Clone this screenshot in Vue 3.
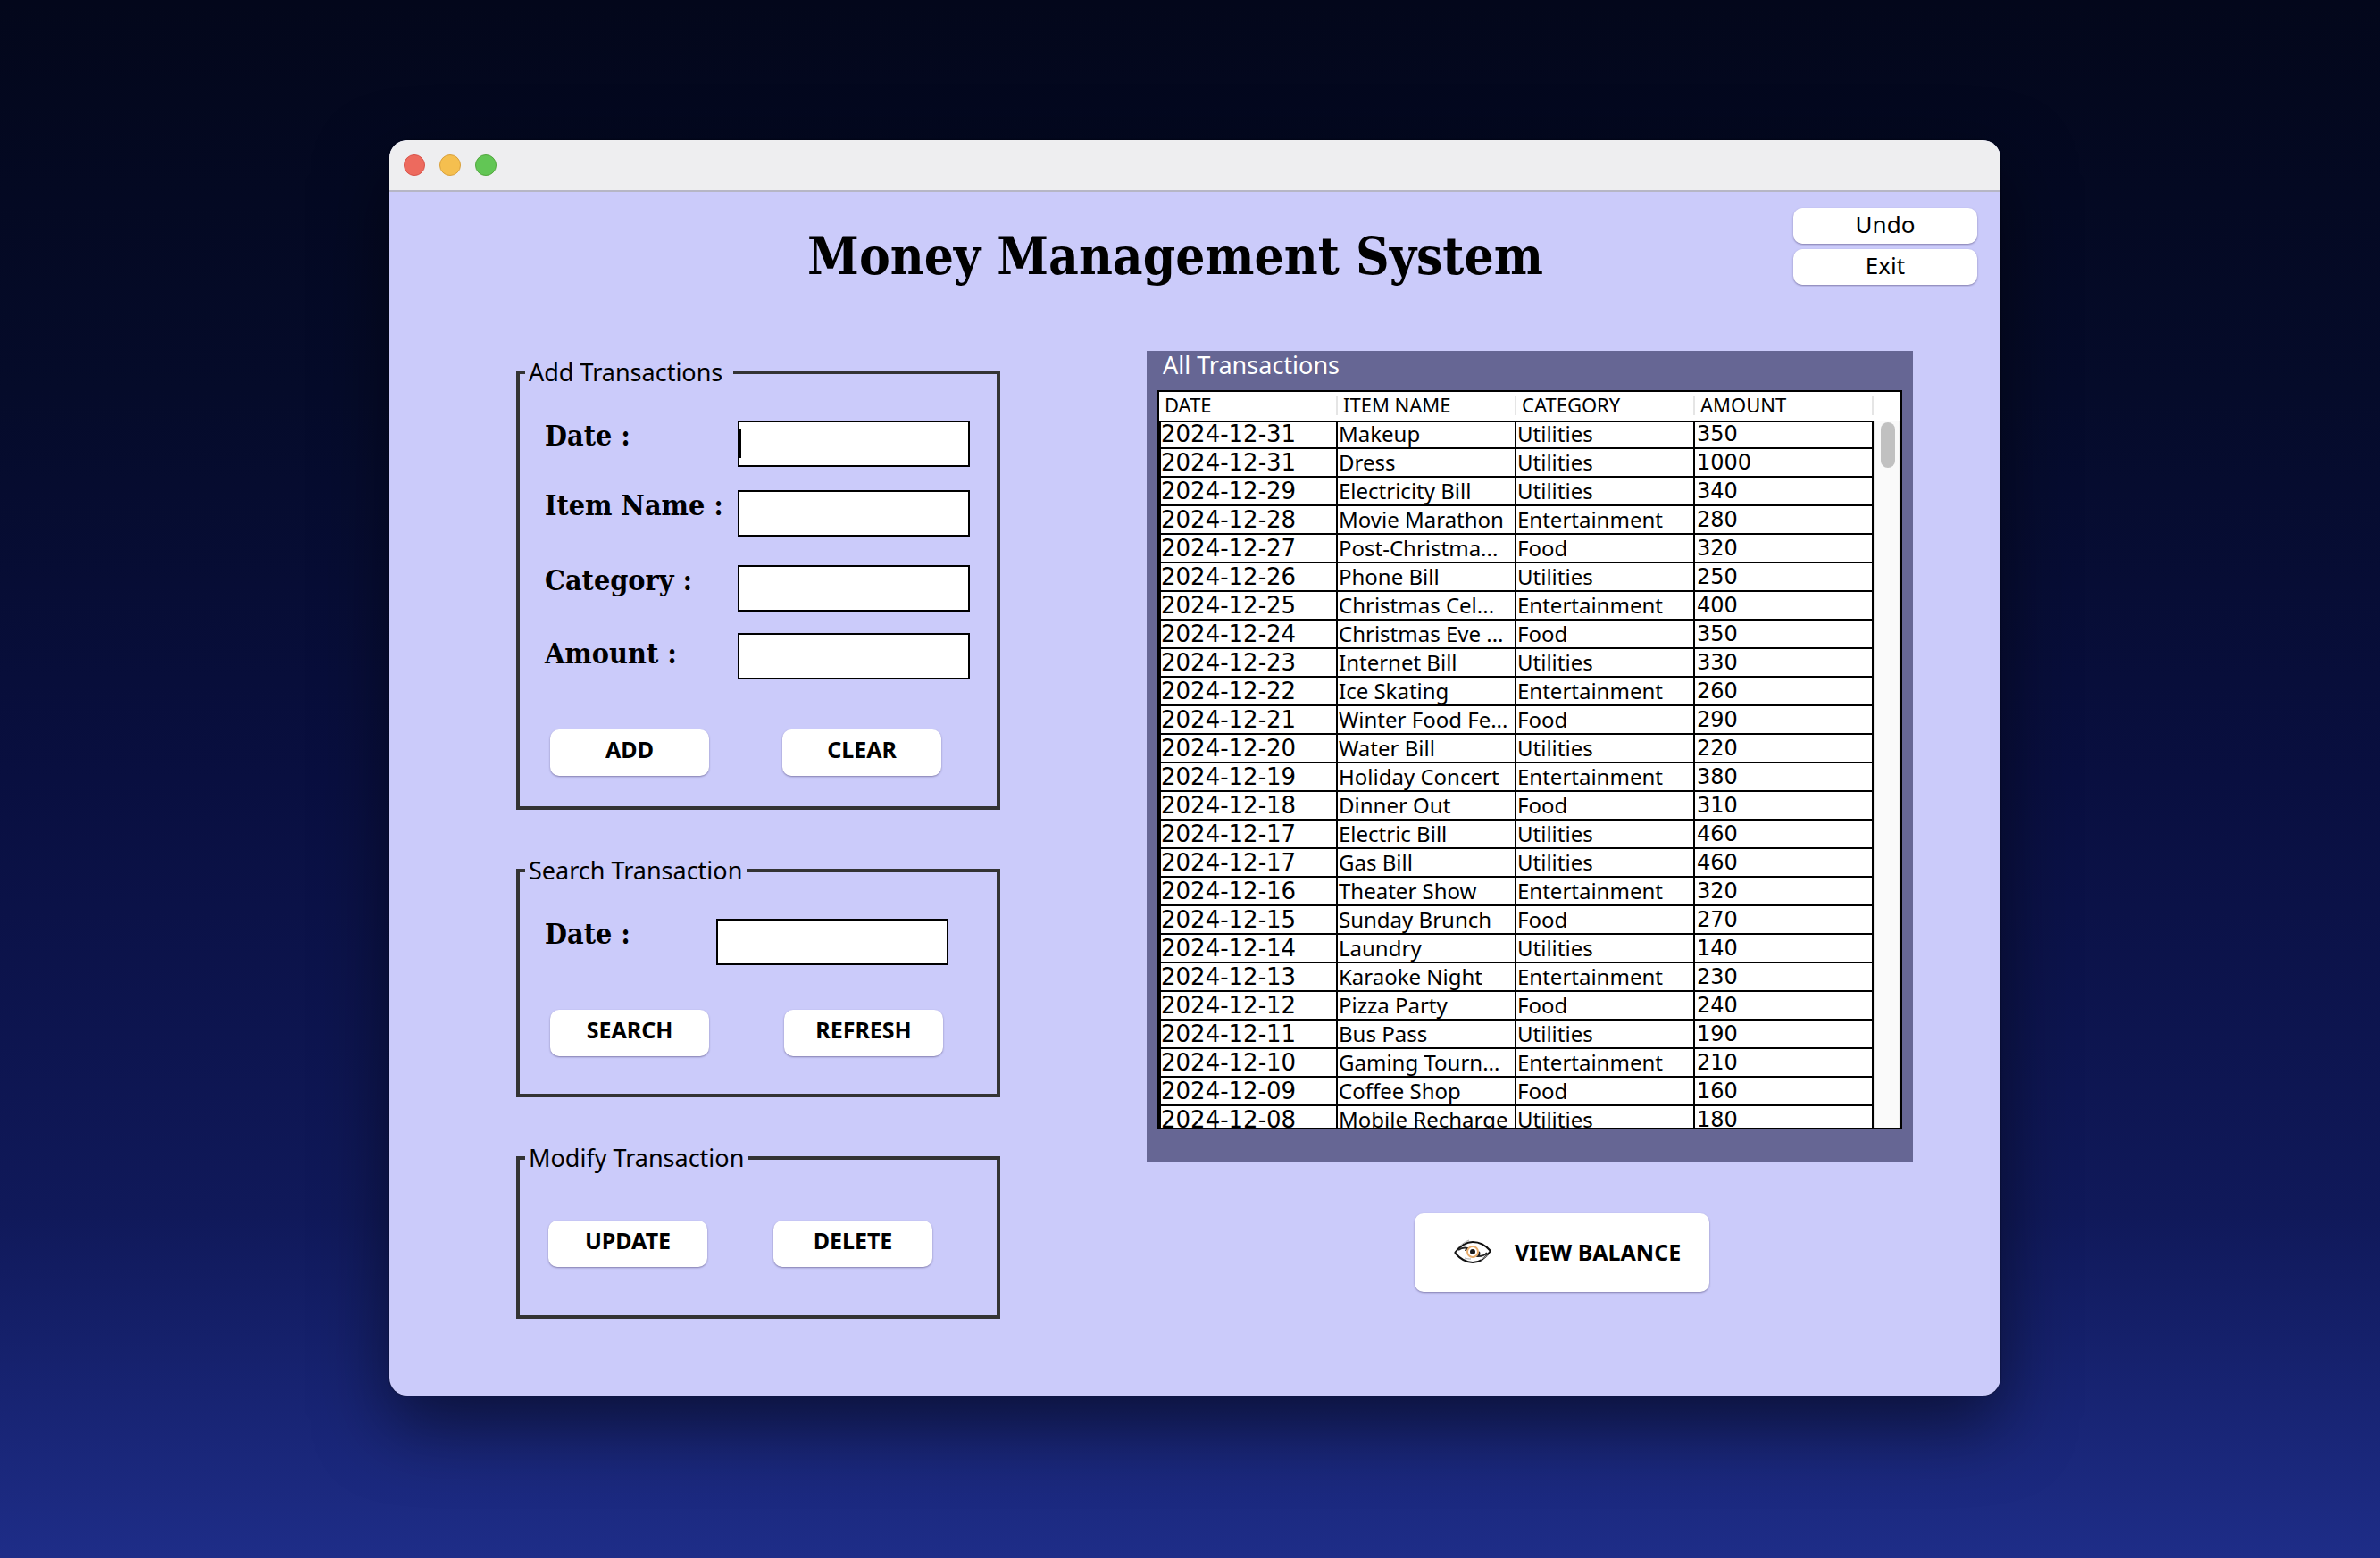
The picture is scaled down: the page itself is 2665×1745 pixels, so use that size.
<script setup>
import { ref } from 'vue'

const columns = ['DATE', 'ITEM NAME', 'CATEGORY', 'AMOUNT']

const transactions = [
  ['2024-12-31', 'Makeup', 'Utilities', '350'],
  ['2024-12-31', 'Dress', 'Utilities', '1000'],
  ['2024-12-29', 'Electricity Bill', 'Utilities', '340'],
  ['2024-12-28', 'Movie Marathon', 'Entertainment', '280'],
  ['2024-12-27', 'Post-Christma...', 'Food', '320'],
  ['2024-12-26', 'Phone Bill', 'Utilities', '250'],
  ['2024-12-25', 'Christmas Cel...', 'Entertainment', '400'],
  ['2024-12-24', 'Christmas Eve ...', 'Food', '350'],
  ['2024-12-23', 'Internet Bill', 'Utilities', '330'],
  ['2024-12-22', 'Ice Skating', 'Entertainment', '260'],
  ['2024-12-21', 'Winter Food Fe...', 'Food', '290'],
  ['2024-12-20', 'Water Bill', 'Utilities', '220'],
  ['2024-12-19', 'Holiday Concert', 'Entertainment', '380'],
  ['2024-12-18', 'Dinner Out', 'Food', '310'],
  ['2024-12-17', 'Electric Bill', 'Utilities', '460'],
  ['2024-12-17', 'Gas Bill', 'Utilities', '460'],
  ['2024-12-16', 'Theater Show', 'Entertainment', '320'],
  ['2024-12-15', 'Sunday Brunch', 'Food', '270'],
  ['2024-12-14', 'Laundry', 'Utilities', '140'],
  ['2024-12-13', 'Karaoke Night', 'Entertainment', '230'],
  ['2024-12-12', 'Pizza Party', 'Food', '240'],
  ['2024-12-11', 'Bus Pass', 'Utilities', '190'],
  ['2024-12-10', 'Gaming Tourn...', 'Entertainment', '210'],
  ['2024-12-09', 'Coffee Shop', 'Food', '160'],
  ['2024-12-08', 'Mobile Recharge', 'Utilities', '180'],
]

const entry = ref({ date: '', item: '', category: '', amount: '' })
const searchDate = ref('')

function clearEntry() {
  entry.value = { date: '', item: '', category: '', amount: '' }
}
</script>

<template>
  <div class="desktop">
    <main class="window">
      <div class="titlebar">
        <span class="light red"></span>
        <span class="light yellow"></span>
        <span class="light green"></span>
      </div>

      <header class="header">
        <h1 class="title">Money Management System</h1>
        <div class="header-actions">
          <button type="button" class="btn btn-small">Undo</button>
          <button type="button" class="btn btn-small">Exit</button>
        </div>
      </header>

      <div class="content">
        <div class="forms">
          <fieldset class="group">
            <legend>Add Transactions&nbsp;</legend>
            <div class="fields fields-add">
              <label for="add-date">Date :</label>
              <input id="add-date" v-model="entry.date" class="active" type="text" />
              <label for="add-item">Item Name :</label>
              <input id="add-item" v-model="entry.item" type="text" />
              <label for="add-category">Category :</label>
              <input id="add-category" v-model="entry.category" type="text" />
              <label for="add-amount" class="low">Amount :</label>
              <input id="add-amount" v-model="entry.amount" type="text" />
            </div>
            <div class="actions actions-add">
              <button type="button" class="btn">ADD</button>
              <button type="button" class="btn" @click="clearEntry">CLEAR</button>
            </div>
          </fieldset>

          <fieldset class="group">
            <legend>Search Transaction</legend>
            <div class="fields fields-search">
              <label for="search-date">Date :</label>
              <input id="search-date" v-model="searchDate" type="text" />
            </div>
            <div class="actions actions-search">
              <button type="button" class="btn">SEARCH</button>
              <button type="button" class="btn" @click="searchDate = ''">REFRESH</button>
            </div>
          </fieldset>

          <fieldset class="group">
            <legend>Modify Transaction</legend>
            <div class="actions actions-modify">
              <button type="button" class="btn">UPDATE</button>
              <button type="button" class="btn">DELETE</button>
            </div>
          </fieldset>
        </div>

        <div class="records">
          <section class="panel">
            <h2 class="panel-title">All Transactions</h2>
            <div class="scroll">
              <table class="table">
                <thead>
                  <tr>
                    <th v-for="name in columns" :key="name" scope="col">{{ name }}</th>
                  </tr>
                </thead>
                <tbody>
                  <tr v-for="(row, i) in transactions" :key="i">
                    <td class="date">{{ row[0] }}</td>
                    <td>{{ row[1] }}</td>
                    <td>{{ row[2] }}</td>
                    <td class="amount">{{ row[3] }}</td>
                  </tr>
                </tbody>
              </table>
              <div class="track"><div class="thumb"></div></div>
            </div>
          </section>

          <button type="button" class="btn btn-balance">
            <svg class="eye" viewBox="0 0 42 28" aria-hidden="true">
              <path d="M1 15C9 5 15 3 21 3c8 0 14 3 20 10" fill="none" stroke="#111" stroke-width="2" />
              <path d="M1 15c6 7 12 11 20 11s14-4 20-13" fill="none" stroke="#111" stroke-width="2" />
              <path d="M5 12c3-2 7-3 10-2c-1 1-2 2-2 3" fill="none" stroke="#222" stroke-width="2" />
              <path d="M28 14c1 2 0 4-1 5c4 0 8-1 10-4" fill="none" stroke="#222" stroke-width="2" />
              <path d="M4 10c4-4 8-7 13-9M12 21c3 1 5 1 7 1M30 23l8-5" fill="none" stroke="#aaa" stroke-width="1" />
              <circle cx="21" cy="14" r="6" fill="#fff" stroke="#e9ad6c" stroke-width="2" />
              <circle cx="21" cy="14" r="3" fill="#1b1b1b" />
            </svg>
            <span>VIEW BALANCE</span>
          </button>
        </div>
      </div>
    </main>
  </div>
</template>

<style>
body {
  margin: 0;
}
</style>

<style scoped>
.desktop {
  box-sizing: border-box;
  min-height: 100vh;
  padding: 157px 425px 182px 436px;
  background: linear-gradient(#03071b 0%, #050b2a 25%, #090f40 50%, #10195a 78%, #1e2d88 100%);
  color: #000;
  font-family: 'Noto Sans', 'Open Sans', sans-serif;
}

.window {
  padding-bottom: 86px;
  border-radius: 20px;
  background: #cbcbfa;
  box-shadow: 0 32px 80px rgba(0, 0, 0, 0.5), 0 0 2px rgba(0, 0, 0, 0.6);
}

.titlebar {
  display: flex;
  align-items: center;
  gap: 16px;
  box-sizing: border-box;
  height: 58px;
  padding-left: 16px;
  border-bottom: 2px solid #b6b6c4;
  border-radius: 20px 20px 0 0;
  background: #eeeef0;
}

.light {
  box-sizing: border-box;
  width: 24px;
  height: 24px;
  border: 1px solid;
  border-radius: 50%;
}

.red {
  border-color: #d8544b;
  background: #ed6a5e;
}

.yellow {
  border-color: #d9a03c;
  background: #f5bf4f;
}

.green {
  border-color: #53a73f;
  background: #62c655;
}

.header {
  display: flex;
  align-items: flex-start;
  padding: 18px 26px 0 188px;
}

.title {
  flex: 1;
  margin: 14px 0 0;
  font: bold 58px/80px 'DejaVu Serif Condensed', 'DejaVu Serif', serif;
  text-align: center;
}

.header-actions {
  display: flex;
  flex-direction: column;
  gap: 6px;
}

.btn {
  width: 178px;
  height: 52px;
  padding: 0 0 8px;
  border: 0;
  border-radius: 10px;
  background: #fff;
  box-shadow: 0 1px 2px rgba(60, 50, 100, 0.5);
  color: #000;
  font: bold 25px/34px 'Noto Sans', 'Open Sans', sans-serif;
}

.btn-small {
  width: 206px;
  height: 40px;
  padding-bottom: 4px;
  font-weight: normal;
  font-size: 26px;
}

.content {
  display: grid;
  grid-template-columns: minmax(0, 542fr) minmax(0, 858fr);
  gap: 164px;
  padding: 66px 98px 0 142px;
}

.forms {
  display: flex;
  flex-direction: column;
  gap: 52px;
  padding-top: 8px;
}

.group {
  margin: 0;
  padding: 0 30px 0 28px;
  border: 4px solid #333;
}

.group legend {
  margin-left: -22px;
  padding: 0 5px 0 4px;
  font-size: 27px;
  line-height: 32px;
}

.fields {
  display: grid;
  grid-template-columns: 216px 260px;
  align-items: start;
  padding-top: 38px;
}

.fields-add {
  grid-template-rows: 78px 84px 76px 52px;
}

.fields-search {
  grid-template-columns: 192px 260px;
}

.fields label {
  font: bold 32px/34px 'DejaVu Serif Condensed', 'DejaVu Serif', serif;
}

.fields .low {
  line-height: 46px;
}

.fields input {
  box-sizing: border-box;
  width: 100%;
  height: 52px;
  padding: 0 4px;
  border: 2px solid #000;
  border-radius: 0;
  outline: 0;
  background: #fff;
  font: 26px 'Noto Sans', 'Open Sans', sans-serif;
}

.fields .active {
  background: linear-gradient(#000, #000) 0 8px / 2px 32px no-repeat #fff;
}

.actions {
  display: flex;
}

.actions-add {
  gap: 82px;
  padding: 56px 0 34px 6px;
}

.actions-search {
  gap: 84px;
  padding: 50px 0 42px 6px;
}

.actions-modify {
  gap: 74px;
  padding: 54px 0 54px 4px;
}

.records {
  display: flex;
  flex-direction: column;
  align-items: flex-start;
}

.panel {
  box-sizing: border-box;
  width: 100%;
  padding: 0 12px 36px;
  background: #666694;
}

.panel-title {
  margin: 0 0 13px;
  padding-left: 6px;
  color: #fff;
  font-weight: normal;
  font-size: 27px;
  line-height: 31px;
}

.scroll {
  display: grid;
  grid-template-columns: minmax(0, 1fr) 30px;
  align-items: start;
  box-sizing: border-box;
  height: 828px;
  overflow: hidden;
  border: 2px solid #000;
  background: #fff;
}

.table {
  width: 100%;
  table-layout: fixed;
  border-spacing: 0;
}

.table th {
  height: 28px;
  padding: 0 0 4px 6px;
  background: linear-gradient(#e5e5e5, #e5e5e5) right 4px / 2px 22px no-repeat;
  font-weight: normal;
  font-size: 22px;
  line-height: 28px;
  text-align: left;
}

.table td {
  height: 30px;
  padding: 0 0 0 1px;
  border-right: 2px solid #000;
  border-bottom: 2px solid #000;
  font-size: 24px;
  line-height: 30px;
  white-space: nowrap;
}

.table tbody tr:first-child td {
  box-shadow: inset 0 2px #000;
}

.table .date {
  padding: 0;
  border-left: 2px solid #000;
  font-family: 'DejaVu Sans', sans-serif;
  font-size: 26px;
}

.table .amount {
  padding-left: 2px;
  font-family: 'DejaVu Sans', sans-serif;
}

.track {
  box-sizing: border-box;
  height: 792px;
  margin-top: 32px;
  padding: 2px 4px 0 6px;
  border-right: 2px solid #f0f0f0;
  border-left: 2px solid #e8e8e8;
  background: #fafafa;
}

.thumb {
  width: 16px;
  height: 51px;
  border-radius: 8px;
  background: #c1c1c1;
}

.btn-balance {
  display: flex;
  align-items: center;
  gap: 26px;
  width: 330px;
  height: 88px;
  margin: 58px 0 0 300px;
  padding: 0 0 2px 44px;
}

.eye {
  width: 42px;
  height: 28px;
}
</style>
